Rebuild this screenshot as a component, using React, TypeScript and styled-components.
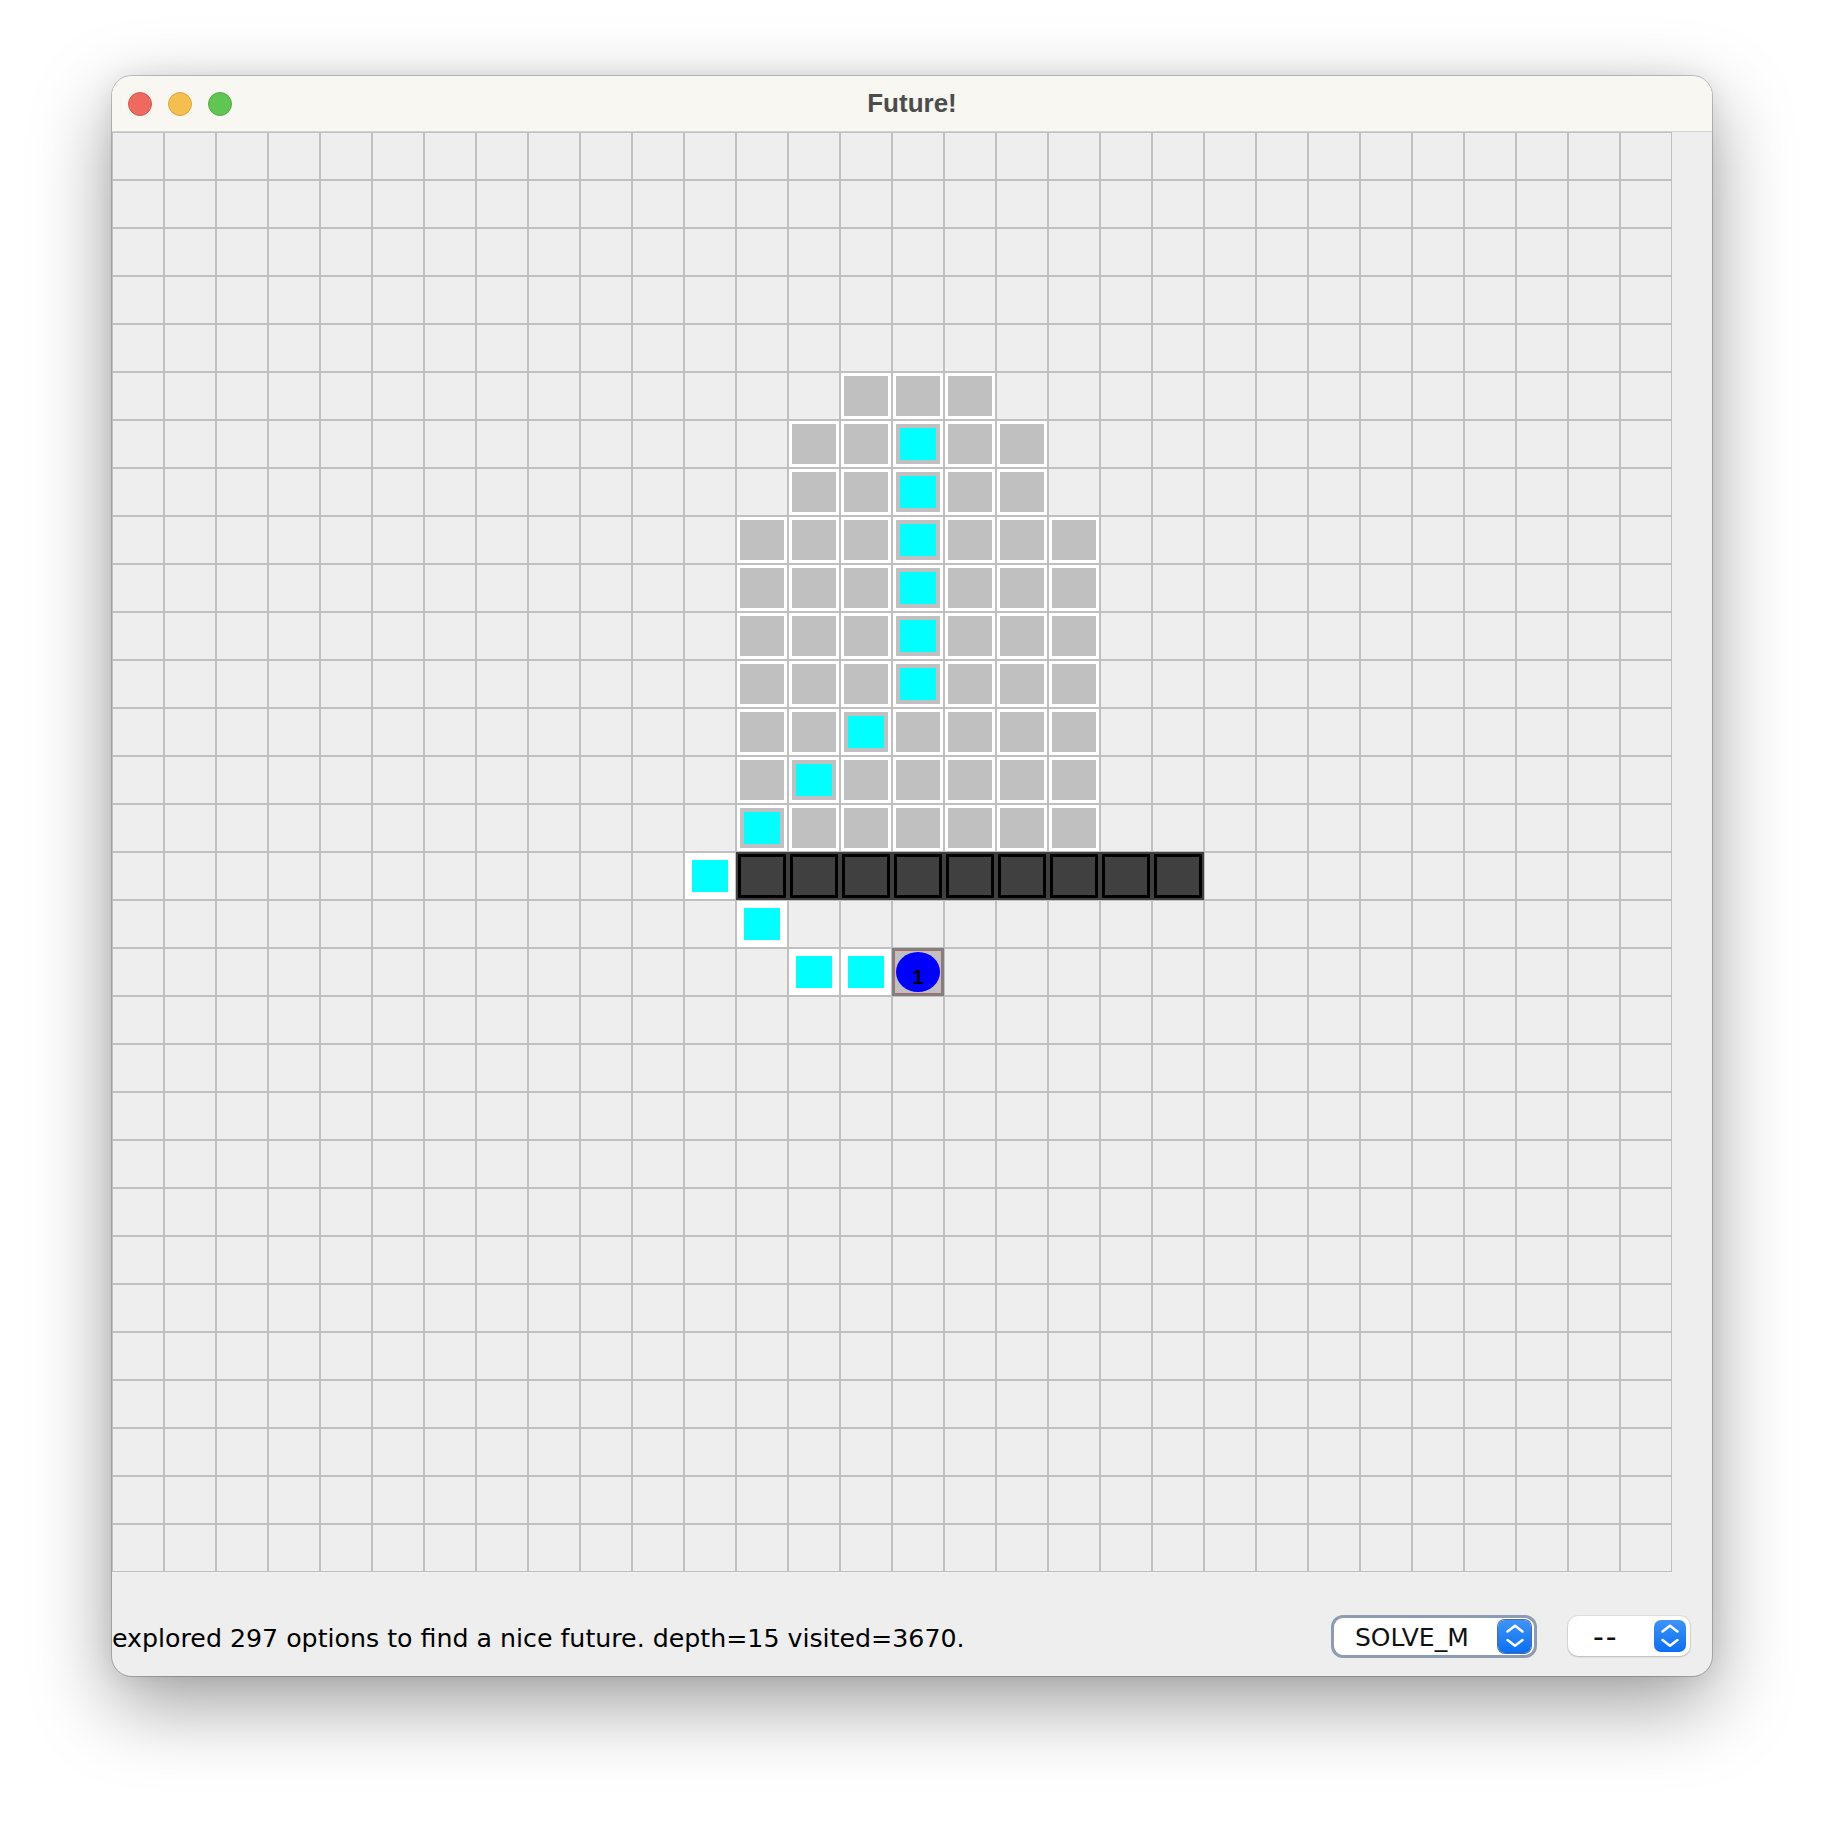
import styled, { createGlobalStyle } from 'styled-components'

type Kind = 'empty' | 'gray' | 'grayPath' | 'path' | 'wall' | 'agent'

const COLS = 30
const ROWS = 30

// board state as the solver left it
function buildBoard(): Kind[][] {
  const board: Kind[][] = Array.from({ length: ROWS }, () => Array<Kind>(COLS).fill('empty'))
  const fill = (r: number, from: number, to: number, k: Kind) => {
    for (let c = from; c <= to; c++) board[r][c] = k
  }
  fill(5, 14, 16, 'gray')
  fill(6, 13, 17, 'gray')
  fill(7, 13, 17, 'gray')
  for (let r = 8; r <= 14; r++) fill(r, 12, 18, 'gray')
  const trail: [number, number][] = [
    [6, 15], [7, 15], [8, 15], [9, 15], [10, 15], [11, 15], [12, 14], [13, 13], [14, 12],
  ]
  trail.forEach(([r, c]) => (board[r][c] = 'grayPath'))
  fill(15, 12, 20, 'wall')
  board[15][11] = 'path'
  board[16][12] = 'path'
  board[17][13] = 'path'
  board[17][14] = 'path'
  board[17][15] = 'agent'
  return board
}

const board = buildBoard()

export default function App() {
  return (
    <>
      <GlobalStyle />
      <Page>
        <Window>
          <TitleBar>
            <Lights>
              <Light $color="#ee6a5f" $edge="#d8574c" />
              <Light $color="#f5bf4f" $edge="#dba43a" />
              <Light $color="#61c554" $edge="#4fae43" />
            </Lights>
            <Title>Future!</Title>
            <span />
          </TitleBar>
          <Board>
            {board.map((row, r) =>
              row.map((kind, c) => (
                <Cell key={`${r}-${c}`} $kind={kind}>
                  {(kind === 'gray' || kind === 'grayPath' || kind === 'path') && (
                    <Block $gray={kind !== 'path'}>{kind !== 'gray' && <Dot />}</Block>
                  )}
                  {kind === 'wall' && <WallRing />}
                  {kind === 'agent' && (
                    <Agent>
                      <AgentLabel>1</AgentLabel>
                    </Agent>
                  )}
                </Cell>
              ))
            )}
          </Board>
          <StatusBar>
            <Status>explored 297 options to find a nice future. depth=15 visited=3670.</Status>
            <Controls>
              <Select $focused>
                <SelectText>SOLVE_M</SelectText>
                <Stepper $focused>
                  <Chevrons />
                </Stepper>
              </Select>
              <Select>
                <SelectText $dashes>--</SelectText>
                <Stepper>
                  <Chevrons />
                </Stepper>
              </Select>
            </Controls>
          </StatusBar>
        </Window>
      </Page>
    </>
  )
}

function Chevrons() {
  return (
    <svg width="32" height="32" viewBox="0 0 32 32" fill="none">
      <polyline points="8.5,11.5 16,5.8 23.5,11.5" stroke="#fff" strokeWidth="2.5" strokeLinecap="round" strokeLinejoin="round" />
      <polyline points="8.5,20 16,25.7 23.5,20" stroke="#fff" strokeWidth="2.5" strokeLinecap="round" strokeLinejoin="round" />
    </svg>
  )
}

const GlobalStyle = createGlobalStyle`
  body {
    margin: 0;
    background: #ffffff;
  }
`

const Page = styled.div`
  box-sizing: border-box;
  width: 1824px;
  height: 1824px;
  padding: 76px 0 0 112px;
`

const Window = styled.div`
  width: 1600px;
  height: 1600px;
  border-radius: 20px;
  overflow: hidden;
  background: #eeeeee;
  display: flex;
  flex-direction: column;
  box-shadow: 0 0 0 1px rgba(0, 0, 0, 0.2), 0 28px 80px rgba(0, 0, 0, 0.38), 0 0 24px rgba(0, 0, 0, 0.08);
`

const TitleBar = styled.div`
  box-sizing: border-box;
  height: 56px;
  flex: none;
  background: #f9f7f1;
  border-bottom: 1px solid #d4d2cc;
  display: grid;
  grid-template-columns: 1fr auto 1fr;
  align-items: center;
`

const Lights = styled.div`
  display: flex;
  gap: 16px;
  padding-left: 16px;
`

const Light = styled.span<{ $color: string; $edge: string }>`
  box-sizing: border-box;
  width: 24px;
  height: 24px;
  border-radius: 50%;
  background: ${(p) => p.$color};
  border: 1px solid ${(p) => p.$edge};
`

const Title = styled.div`
  font-family: 'Liberation Sans', Arial, sans-serif;
  font-weight: 700;
  font-size: 26px;
  color: #4c4c4c;
`

const Board = styled.div`
  display: grid;
  grid-template-columns: repeat(${COLS}, 52px);
  grid-auto-rows: 48px;
  flex: none;
`

const Cell = styled.div<{ $kind: Kind }>`
  box-sizing: border-box;
  display: flex;
  align-items: center;
  justify-content: center;
  border: 1px solid #c0c0c0;
  background: ${({ $kind }) =>
    $kind === 'empty' ? '#eeeeee' : $kind === 'wall' ? '#404040' : $kind === 'agent' ? '#c0c0c0' : '#ffffff'};
  ${({ $kind }) => $kind === 'wall' && 'border-color: #404040;'}
  ${({ $kind }) =>
    $kind === 'agent' &&
    `
    border: 3px solid #808080;
    box-shadow: inset 0 0 0 1px #f2a9a9;
  `}
`

const Block = styled.div<{ $gray: boolean }>`
  width: 44px;
  height: 40px;
  background: ${(p) => (p.$gray ? '#c0c0c0' : '#ffffff')};
  display: flex;
  align-items: center;
  justify-content: center;
`

const Dot = styled.div`
  width: 36px;
  height: 32px;
  background: #00ffff;
`

const WallRing = styled.div`
  box-sizing: border-box;
  width: 48px;
  height: 44px;
  border: 3px solid #000000;
`

const Agent = styled.div`
  width: 44px;
  height: 40px;
  border-radius: 50%;
  background: #0000ff;
  display: flex;
  align-items: center;
  justify-content: center;
`

const AgentLabel = styled.span`
  font-family: 'Liberation Sans', Arial, sans-serif;
  font-weight: 700;
  font-size: 20px;
  line-height: 1;
  color: #000000;
  padding-top: 10px;
`

const StatusBar = styled.div`
  box-sizing: border-box;
  flex: 1;
  display: flex;
  align-items: center;
  padding: 24px 22px 0 0;
`

const Status = styled.div`
  flex: 1;
  font-family: 'DejaVu Sans', Verdana, sans-serif;
  font-size: 25.25px;
  color: #000000;
  padding-top: 4px;
  white-space: nowrap;
`

const Controls = styled.div`
  display: flex;
  align-items: center;
  gap: 31px;
`

const Select = styled.div<{ $focused?: boolean }>`
  box-sizing: border-box;
  display: flex;
  align-items: center;
  background: #ffffff;
  ${(p) =>
    p.$focused
      ? `
    width: 206px;
    height: 43px;
    border: 3px solid #8c9cb3;
    border-radius: 12px;
    padding: 0 3px 0 21px;
  `
      : `
    width: 122px;
    height: 40px;
    border-radius: 10px;
    padding: 0 4px 0 25px;
    box-shadow: 0 0 0 1px rgba(0, 0, 0, 0.06), 0 1px 2px rgba(0, 0, 0, 0.18);
  `}
`

const SelectText = styled.span<{ $dashes?: boolean }>`
  flex: 1;
  font-family: 'DejaVu Sans', Verdana, sans-serif;
  font-size: ${(p) => (p.$dashes ? '30px' : '25px')};
  line-height: 1;
  color: #111111;
  padding-top: 2px;
  letter-spacing: ${(p) => (p.$dashes ? '2px' : '0')};
`

const Stepper = styled.div<{ $focused?: boolean }>`
  box-sizing: border-box;
  width: ${(p) => (p.$focused ? '33px' : '32px')};
  height: ${(p) => (p.$focused ? '33px' : '32px')};
  border-radius: 7px;
  background: linear-gradient(#3d93f8, #0b6ff4);
  display: flex;
  align-items: center;
  justify-content: center;
  ${(p) => p.$focused && 'box-shadow: 0 0 0 1px #4c6d98;'}
`
